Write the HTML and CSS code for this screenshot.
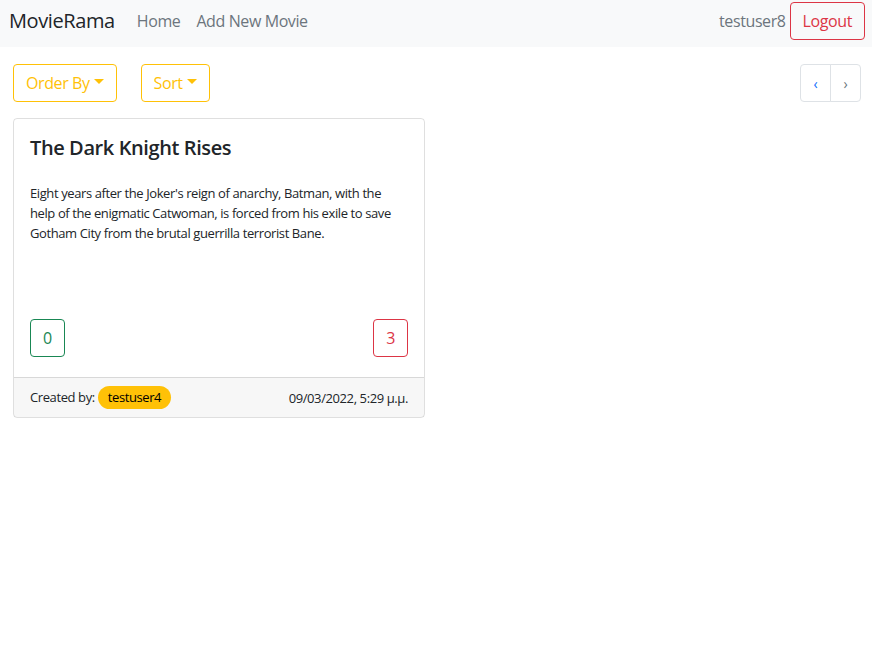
FILE: index.html
```html
<!DOCTYPE html>
<html>
<head>
<meta charset="utf-8">
<link rel="stylesheet" href="styles.css">
</head>
<body>
<nav class="navbar">
  <a class="brand">MovieRama</a>
  <ul class="nav-links">
    <li>Home</li>
    <li>Add New Movie</li>
  </ul>
  <div class="nav-right">
    <span class="username">testuser8</span>
    <button class="btn btn-outline-danger">Logout</button>
  </div>
</nav>
<main class="container">
  <div class="toolbar">
    <div class="filters">
      <button class="btn btn-outline-warning">Order By<span class="caret"></span></button>
      <button class="btn btn-outline-warning">Sort<span class="caret"></span></button>
    </div>
    <div class="pagination">
      <span class="page-link active-link">&lsaquo;</span>
      <span class="page-link">&rsaquo;</span>
    </div>
  </div>
  <div class="card">
    <div class="card-body">
      <h5 class="card-title">The Dark Knight Rises</h5>
      <p class="card-text">Eight years after the Joker's reign of anarchy, Batman, with the help of the enigmatic Catwoman, is forced from his exile to save Gotham City from the brutal guerrilla terrorist Bane.</p>
      <div class="votes">
        <button class="btn vote btn-outline-success">0</button>
        <button class="btn vote btn-outline-danger">3</button>
      </div>
    </div>
    <div class="card-footer">
      <span class="created">Created by: <span class="badge">testuser4</span></span>
      <span class="date">09/03/2022, 5:29 μ.μ.</span>
    </div>
  </div>
</main>
</body>
</html>
```
FILE: styles.css
```css
* { box-sizing: border-box; }
body {
  margin: 0;
  font-family: "Open Sans", "Noto Sans", sans-serif;
  font-size: 16px;
  letter-spacing: -0.025em;
  color: #212529;
  background: #fff;
}
.navbar {
  display: flex;
  align-items: center;
  height: 47px;
  padding: 0 7px 6px 9px;
  background: #f8f9fa;
}
.brand {
  font-size: 20px;
  color: #212529;
  margin-right: 22px;
}
.nav-links {
  display: flex;
  list-style: none;
  margin: 0;
  padding: 0;
  gap: 16px;
  color: #6c757d;
}
.nav-right {
  margin-left: auto;
  display: flex;
  align-items: center;
  gap: 4px;
  color: #6c757d;
}
.btn {
  font-family: inherit;
  font-size: 16px;
  letter-spacing: inherit;
  line-height: 24px;
  padding: 6px 12px;
  border-radius: 4px;
  background: transparent;
  border: 1px solid;
  height: 38px;
  display: inline-flex;
  align-items: center;
}
.btn-outline-danger { color: #dc3545; border-color: #dc3545; }
.btn-outline-warning { color: #ffc107; border-color: #ffc107; }
.btn-outline-success { color: #198754; border-color: #198754; }
.caret {
  display: inline-block;
  margin-left: 4px;
  border-top: 5px solid;
  border-left: 5px solid transparent;
  border-right: 5px solid transparent;
  margin-bottom: 3px;
}
.container {
  padding: 17px 11px 0 13px;
}
.toolbar {
  display: flex;
  justify-content: space-between;
  align-items: center;
}
.filters { display: flex; gap: 24px; }
.pagination {
  display: flex;
}
.page-link {
  width: 31px;
  height: 38px;
  display: flex;
  align-items: center;
  justify-content: center;
  border: 1px solid #dee2e6;
  color: #6c757d;
  font-size: 14px;
}
.page-link:first-child { border-radius: 4px 0 0 4px; }
.page-link + .page-link { margin-left: -1px; border-radius: 0 4px 4px 0; }
.active-link { color: #0d6efd; }
.card {
  margin-top: 16px;
  width: 412px;
  border: 1px solid rgba(0,0,0,.125);
  border-radius: 4px;
}
.card-body {
  padding: 16px 16px 20px;
  height: 258px;
  display: flex;
  flex-direction: column;
}
.card-title {
  margin: 0 0 23px;
  font-size: 20px;
  font-weight: 600;
  line-height: 1.2;
  padding-top: 1px;
}
.card-text {
  margin: 0;
  font-size: 13px;
  line-height: 20px;
}
.votes {
  margin-top: auto;
  display: flex;
  justify-content: space-between;
}
.vote { padding: 6px 12px; }
.card-footer {
  background: rgba(0,0,0,.03);
  border-top: 1px solid rgba(0,0,0,.125);
  height: 40px;
  padding: 0 16px;
  display: flex;
  align-items: center;
  justify-content: space-between;
  font-size: 13px;
}
.badge {
  display: inline-block;
  background: #ffc107;
  color: #000;
  border-radius: 12px;
  padding: 3px 10px;
  line-height: 17px;
}
```
